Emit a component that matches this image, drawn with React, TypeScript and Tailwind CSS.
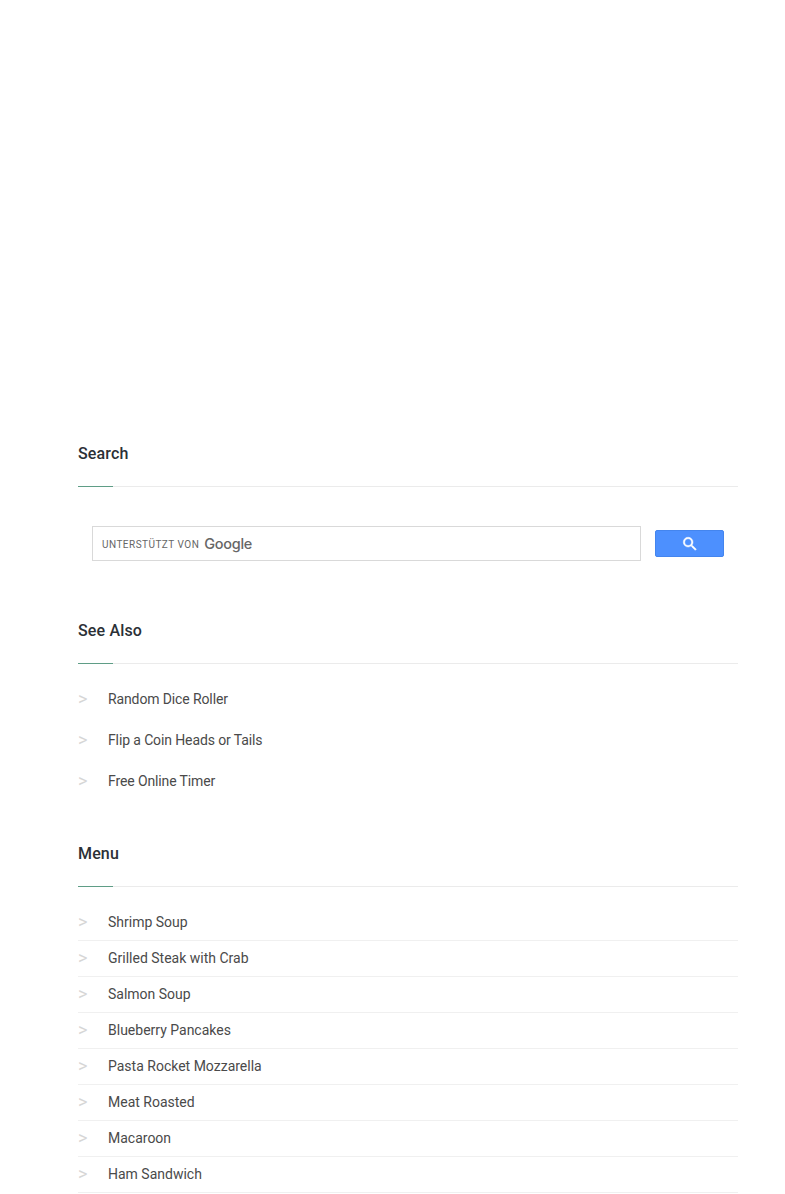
const seeAlso = ["Random Dice Roller", "Flip a Coin Heads or Tails", "Free Online Timer"]

const menu = [
    "Shrimp Soup",
    "Grilled Steak with Crab",
    "Salmon Soup",
    "Blueberry Pancakes",
    "Pasta Rocket Mozzarella",
    "Meat Roasted",
    "Macaroon",
    "Ham Sandwich",
]

const Heading = ({ title }: { title: string }) => {
    return (
        <div className="relative border-b border-[#ebebeb] pb-[21px]">
            <h3 className="text-base leading-[22px] font-medium tracking-[0.15px] text-[#2b3036]">{title}</h3>
            <div className="absolute left-0 -bottom-px w-[35px] h-px bg-[#5f9d86]" />
        </div>
    )
}

const Item = ({ label }: { label: string }) => {
    return (
        <div className="flex items-center text-sm leading-[21px] text-[#4a4a4a]">
            <span className="w-[30px] pb-px text-lg leading-[20px] text-[#d6d6d6]">&gt;</span>
            <a href="#">{label}</a>
        </div>
    )
}

export default function App() {
    return (
        <div className="w-[785px] h-[1194px] overflow-hidden bg-white pl-[78px] pr-[47px] pt-[443px] font-['Roboto',sans-serif]">
            <section>
                <Heading title="Search" />
                <div className="flex items-center gap-[14px] px-[14px] mt-[39px]">
                    <div className="flex-1 h-[35px] flex items-center gap-[5px] border border-[#d9d9d9] pl-[9px]">
                        <span className="pt-[2px] text-[10px] tracking-[0.47px] text-[#666]">UNTERSTÜTZT VON</span>
                        <span className="font-['Inter',sans-serif] text-[14.5px] font-medium tracking-[-0.3px] text-[#666]">Google</span>
                    </div>
                    <button className="w-[69px] h-[27px] flex items-center justify-center rounded-[2px] border border-[#4485ee] bg-[#4d90fe]">
                        <svg width="18" height="18" viewBox="0 0 24 24" fill="#fff" stroke="#fff" strokeWidth="0.6">
                            <path d="M15.5 14h-.79l-.28-.27A6.471 6.471 0 0 0 16 9.5 6.5 6.5 0 1 0 9.5 16c1.61 0 3.09-.59 4.23-1.57l.27.28v.79l5 4.99L20.49 19l-4.99-5zm-6 0C7.01 14 5 11.99 5 9.5S7.01 5 9.5 5 14 7.01 14 9.5 11.99 14 9.5 14z" />
                        </svg>
                    </button>
                </div>
            </section>

            <section className="mt-[59px]">
                <Heading title="See Also" />
                <div className="flex flex-col gap-5 mt-[25px] tracking-[-0.12px]">
                    {seeAlso.map((label) => (
                        <Item key={label} label={label} />
                    ))}
                </div>
            </section>

            <section className="mt-[51px]">
                <Heading title="Menu" />
                <div className="mt-[18px]">
                    {menu.map((label) => (
                        <div key={label} className="py-[7px] border-b border-[#f0f0f0]">
                            <Item label={label} />
                        </div>
                    ))}
                </div>
            </section>
        </div>
    )
}
